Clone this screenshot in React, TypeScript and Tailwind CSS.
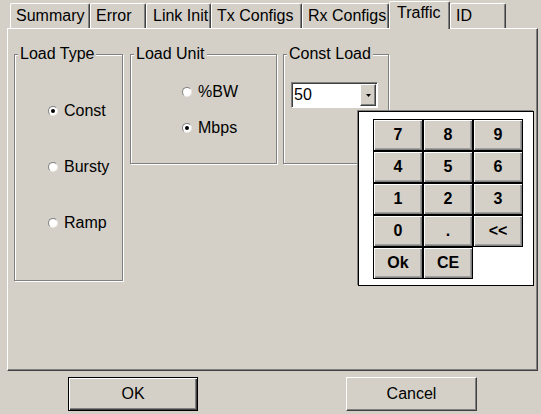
import { FC } from 'react';

const tabs = [
  { label: 'Summary', cls: 'w-[80px]' },
  { label: 'Error', cls: 'w-[56px]' },
  { label: 'Link Init', cls: 'w-[65px] pl-[6px]' },
  { label: 'Tx Configs', cls: 'w-[91px]' },
  { label: 'Rx Configs', cls: 'w-[87px]' },
  { label: 'Traffic', cls: 'w-[61px] pl-[7px]', active: true },
  { label: 'ID', cls: 'w-[56px]' },
];

const keys = ['7', '8', '9', '4', '5', '6', '1', '2', '3', '0', '.', '<<', 'Ok', 'CE'];

const Radio: FC<{ label: string; checked?: boolean }> = ({ label, checked }) => (
  <div className="flex items-center h-[18px] gap-[6px]">
    <span className="w-[10px] h-[10px] rounded-full bg-white border border-t-[#808080] border-l-[#808080] border-r-[#e8e6e2] border-b-[#e8e6e2] flex items-center justify-center">
      {checked && <span className="w-[4px] h-[4px] rounded-full bg-black" />}
    </span>
    <span>{label}</span>
  </div>
);

const GroupBox: FC<{ title: string; className: string; children?: React.ReactNode }> = ({ title, className, children }) => (
  <div className={`relative mt-[9px] border border-[#808080] shadow-[1px_1px_0_#fff,inset_1px_1px_0_#fff] ${className}`}>
    <span className="absolute left-[3px] -top-[10px] px-[2px] bg-[#d4d0c8] leading-[18px]">{title}</span>
    {children}
  </div>
);

const App: FC = () => {
  return (
    <div className="w-[541px] h-[414px] bg-[#d4d0c8] text-black text-[16px] overflow-hidden" style={{ fontFamily: '"Liberation Sans", Arial, sans-serif' }}>
      <div className="flex items-end h-[28px] pl-[10px]">
        {tabs.map(t =>
          t.active ? (
            <div key={t.label} className={`relative z-10 -mb-px h-[28px] bg-[#d4d0c8] border-l border-t border-white border-r border-r-[#404040] shadow-[inset_-1px_0_0_#808080] rounded-t-[2px] pt-[2px] leading-[18px] ${t.cls}`}>
              {t.label}
            </div>
          ) : (
            <div key={t.label} className={`h-[25px] border-l border-t border-white border-r border-r-[#404040] shadow-[inset_-1px_0_0_#808080] rounded-t-[2px] pt-[3px] pl-[5px] leading-[18px] ${t.cls}`}>
              {t.label}
            </div>
          )
        )}
      </div>

      <div className="relative ml-[7px] w-[531px] h-[343px] border border-t-white border-l-white border-r-[#404040] border-b-[#404040] shadow-[inset_-1px_-1px_0_#808080] pl-[6px] pt-[16px]">
        <div className="flex items-start">
          <GroupBox title="Load Type" className="w-[109px] h-[227px] pt-[47px] pl-[33px] flex flex-col gap-[38px]">
            <Radio label="Const" checked />
            <Radio label="Bursty" />
            <Radio label="Ramp" />
          </GroupBox>

          <GroupBox title="Load Unit" className="ml-[7px] w-[147px] h-[110px] pt-[28px] pl-[51px] flex flex-col gap-[18px]">
            <Radio label="%BW" />
            <Radio label="Mbps" checked />
          </GroupBox>

          <GroupBox title="Const Load" className="ml-[6px] w-[106px] h-[110px] pt-[27px] pl-[7px]">
            <div className="flex w-[87px] h-[26px] bg-white border border-t-[#808080] border-l-[#808080] border-r-white border-b-white shadow-[inset_1px_1px_0_#404040]">
              <span className="flex-1 pl-[2px] pt-[3px] leading-[18px]">50</span>
              <span className="mt-[1px] mb-[1px] mr-[1px] w-[16px] flex items-center justify-center bg-[#d4d0c8] border border-t-white border-l-white border-r-[#404040] border-b-[#404040] shadow-[inset_-1px_-1px_0_#808080]">
                <svg width="5" height="3" viewBox="0 0 5 3">
                  <polygon points="0,0 5,0 2.5,3" fill="#000" />
                </svg>
              </span>
            </div>
          </GroupBox>
        </div>

        <div className="absolute left-[350px] top-[82px] w-[176px] h-[175px] bg-white border border-black shadow-[-1px_-1px_0_#808080] pl-[14px] pt-[7px]">
          <div className="grid grid-cols-[50px_50px_50px] auto-rows-[32px]">
            {keys.map(k => (
              <button
                key={k}
                type="button"
                className="bg-[#d4d0c8] border border-black shadow-[inset_1px_1px_0_#fff,inset_-1px_-1px_0_#808080,inset_-2px_-2px_0_#a0a0a0] font-bold text-[16px] leading-none"
              >
                {k}
              </button>
            ))}
          </div>
        </div>
      </div>

      <div className="flex mt-[6px] pl-[68px]">
        <button type="button" className="w-[130px] h-[34px] bg-[#d4d0c8] border border-black shadow-[inset_1px_1px_0_#fff,inset_-1px_-1px_0_#404040,inset_-2px_-2px_0_#808080]">
          OK
        </button>
        <button type="button" className="ml-[148px] w-[131px] h-[34px] bg-[#d4d0c8] border border-t-white border-l-white border-r-[#404040] border-b-[#404040] shadow-[inset_-1px_-1px_0_#808080]">
          Cancel
        </button>
      </div>
    </div>
  );
};

export default App;
